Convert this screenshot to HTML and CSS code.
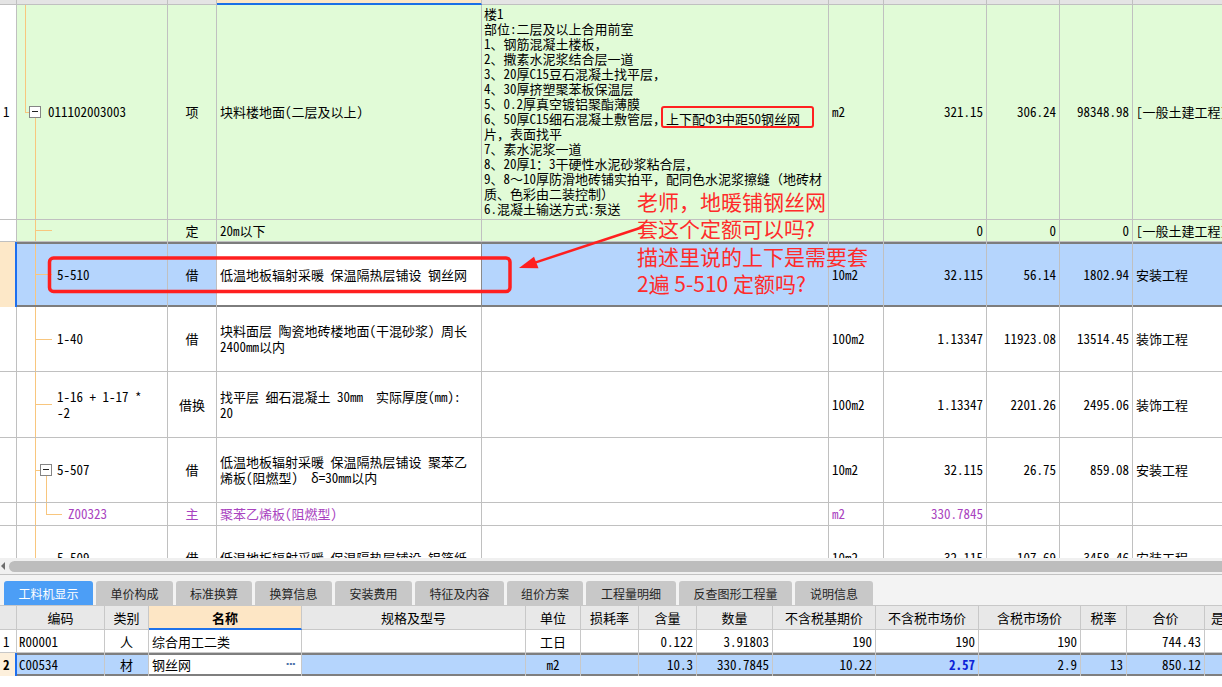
FILE: index.html
```html
<!DOCTYPE html>
<html lang="zh-CN">
<head>
<meta charset="utf-8">
<title>工料机</title>
<link rel="stylesheet" href="styles.css">
</head>
<body>
<div class="app">
  <div class="grid">
    <div class="row hdr">
      <div class="c num"></div><div class="c code"></div><div class="c type"></div><div class="c name hsel"></div><div class="c feat"></div><div class="c unit"></div><div class="c qty"></div><div class="c price"></div><div class="c total"></div><div class="c major"></div>
    </div>
    <div class="row h1 green">
      <div class="c num">1</div>
      <div class="c code t-root"><span class="box"></span>011102003003</div>
      <div class="c type">项</div>
      <div class="c name">块料楼地面(二层及以上)</div>
      <div class="c feat top"><div class="lines">楼1<br>部位:二层及以上合用前室<br>1、钢筋混凝土楼板，<br>2、撒素水泥浆结合层一道<br>3、20厚C15豆石混凝土找平层，<br>4、30厚挤塑聚苯板保温层<br>5、0.2厚真空镀铝聚酯薄膜<br>6、50厚C15细石混凝土敷管层，<span class="mark">上下配Φ3中距50钢丝网</span><br>片，表面找平<br>7、素水泥浆一道<br>8、20厚1：3干硬性水泥砂浆粘合层，<br>9、8～10厚防滑地砖铺实拍平，配同色水泥浆擦缝（地砖材<br>质、色彩由二装控制）<br>6.混凝土输送方式:泵送</div></div>
      <div class="c unit">m2</div>
      <div class="c qty">321.15</div>
      <div class="c price">306.24</div>
      <div class="c total">98348.98</div>
      <div class="c major">[一般土建工程]</div>
    </div>
    <div class="row h2 green">
      <div class="c num"></div>
      <div class="c code t-leaf"></div>
      <div class="c type">定</div>
      <div class="c name">20m以下</div>
      <div class="c feat"></div>
      <div class="c unit"></div>
      <div class="c qty">0</div>
      <div class="c price">0</div>
      <div class="c total">0</div>
      <div class="c major">[一般土建工程]</div>
    </div>
    <div class="row h3 sel">
      <div class="c num"></div>
      <div class="c code t-leaf">5-510</div>
      <div class="c type">借</div>
      <div class="c name">低温地板辐射采暖 保温隔热层铺设 钢丝网</div>
      <div class="c feat"></div>
      <div class="c unit">10m2</div>
      <div class="c qty">32.115</div>
      <div class="c price">56.14</div>
      <div class="c total">1802.94</div>
      <div class="c major">安装工程</div>
    </div>
    <div class="row h4">
      <div class="c num"></div>
      <div class="c code t-leaf">1-40</div>
      <div class="c type">借</div>
      <div class="c name"><div class="lines2">块料面层 陶瓷地砖楼地面(干混砂浆) 周长<br>2400mm以内</div></div>
      <div class="c feat"></div>
      <div class="c unit">100m2</div>
      <div class="c qty">1.13347</div>
      <div class="c price">11923.08</div>
      <div class="c total">13514.45</div>
      <div class="c major">装饰工程</div>
    </div>
    <div class="row h5">
      <div class="c num"></div>
      <div class="c code t-leaf"><div class="lines2">1-16 + 1-17 *<br>-2</div></div>
      <div class="c type">借换</div>
      <div class="c name"><div class="lines2">找平层 细石混凝土 30mm  实际厚度(mm):<br>20</div></div>
      <div class="c feat"></div>
      <div class="c unit">100m2</div>
      <div class="c qty">1.13347</div>
      <div class="c price">2201.26</div>
      <div class="c total">2495.06</div>
      <div class="c major">装饰工程</div>
    </div>
    <div class="row h6">
      <div class="c num"></div>
      <div class="c code t-node"><span class="box"></span>5-507</div>
      <div class="c type">借</div>
      <div class="c name"><div class="lines2">低温地板辐射采暖 保温隔热层铺设 聚苯乙<br>烯板(阻燃型)  δ=30mm以内</div></div>
      <div class="c feat"></div>
      <div class="c unit">10m2</div>
      <div class="c qty">32.115</div>
      <div class="c price">26.75</div>
      <div class="c total">859.08</div>
      <div class="c major">安装工程</div>
    </div>
    <div class="row h7 purple">
      <div class="c num"></div>
      <div class="c code t-sub">Z00323</div>
      <div class="c type">主</div>
      <div class="c name">聚苯乙烯板(阻燃型)</div>
      <div class="c feat"></div>
      <div class="c unit">m2</div>
      <div class="c qty">330.7845</div>
      <div class="c price"></div>
      <div class="c total"></div>
      <div class="c major"></div>
    </div>
    <div class="row h8">
      <div class="c num"></div>
      <div class="c code t-leaf">5-509</div>
      <div class="c type">借</div>
      <div class="c name">低温地板辐射采暖 保温隔热层铺设 铝箔纸</div>
      <div class="c feat"></div>
      <div class="c unit">10m2</div>
      <div class="c qty">32.115</div>
      <div class="c price">107.69</div>
      <div class="c total">3458.46</div>
      <div class="c major">安装工程</div>
    </div>

    <svg class="anno" width="1222" height="558" viewBox="0 0 1222 558" aria-hidden="true">
      <rect x="49.5" y="258" width="460.5" height="33.5" rx="4" fill="none" stroke="#ff1f1f" stroke-width="3.5"/>
      <line x1="643" y1="227" x2="535" y2="262.6" stroke="#ff1f1f" stroke-width="2.5"/>
      <polygon points="519,268 538.5,268.2 534,256.8" fill="#ff1f1f"/>
    </svg>
    <div class="note">老师，地暖铺钢丝网<br>套这个定额可以吗?<br>描述里说的上下是需要套<br>2遍 5-510 定额吗?</div>
  </div>

  <div class="hscroll"><span class="arrow"></span><span class="thumb"></span></div>

  <div class="tabs">
    <div class="tab on w89">工料机显示</div>
    <div class="tab w77">单价构成</div>
    <div class="tab w76">标准换算</div>
    <div class="tab w77">换算信息</div>
    <div class="tab w77">安装费用</div>
    <div class="tab w89">特征及内容</div>
    <div class="tab w76">组价方案</div>
    <div class="tab w90">工程量明细</div>
    <div class="tab w113">反查图形工程量</div>
    <div class="tab w78">说明信息</div>
  </div>

  <div class="bgrid">
    <div class="brow bhdr">
      <div class="bc bnum"></div>
      <div class="bc bcode">编码</div>
      <div class="bc btype">类别</div>
      <div class="bc bname">名称</div>
      <div class="bc bspec">规格及型号</div>
      <div class="bc bunit">单位</div>
      <div class="bc bloss">损耗率</div>
      <div class="bc bcont">含量</div>
      <div class="bc bqty">数量</div>
      <div class="bc bbase">不含税基期价</div>
      <div class="bc bmkt">不含税市场价</div>
      <div class="bc btmkt">含税市场价</div>
      <div class="bc btax">税率</div>
      <div class="bc btotal">合价</div>
      <div class="bc byes">是</div>
    </div>
    <div class="brow">
      <div class="bc bnum">1</div>
      <div class="bc bcode">R00001</div>
      <div class="bc btype">人</div>
      <div class="bc bname">综合用工二类</div>
      <div class="bc bspec"></div>
      <div class="bc bunit">工日</div>
      <div class="bc bloss"></div>
      <div class="bc bcont">0.122</div>
      <div class="bc bqty">3.91803</div>
      <div class="bc bbase">190</div>
      <div class="bc bmkt">190</div>
      <div class="bc btmkt">190</div>
      <div class="bc btax"></div>
      <div class="bc btotal">744.43</div>
      <div class="bc byes"></div>
    </div>
    <div class="brow bsel">
      <div class="bc bnum">2</div>
      <div class="bc bcode">C00534</div>
      <div class="bc btype">材</div>
      <div class="bc bname"><span>钢丝网</span><span class="dots">···</span></div>
      <div class="bc bspec"></div>
      <div class="bc bunit">m2</div>
      <div class="bc bloss"></div>
      <div class="bc bcont">10.3</div>
      <div class="bc bqty">330.7845</div>
      <div class="bc bbase">10.22</div>
      <div class="bc bmkt"><b class="hot">2.57</b></div>
      <div class="bc btmkt">2.9</div>
      <div class="bc btax">13</div>
      <div class="bc btotal">850.12</div>
      <div class="bc byes"></div>
    </div>
  </div>
</div>
</body>
</html>
```

FILE: styles.css
```css
* { box-sizing: border-box; }
html, body { margin: 0; padding: 0; }
body {
  width: 1222px;
  height: 687px;
  overflow: hidden;
  background: #fff;
  color: #000;
  font-family: "Noto Sans Mono CJK SC", "Noto Sans CJK SC", "DejaVu Sans", sans-serif;
  font-size: 13px;
}
.app { display: flex; flex-direction: column; height: 687px; }

/* ---------- top grid ---------- */
.grid { position: relative; height: 558px; overflow: hidden; flex: none; }
.row { display: flex; border-bottom: 1px solid #c0c0c0; }
.c {
  display: flex;
  align-items: center;
  flex: none;
  border-right: 1px solid #c0c0c0;
  white-space: pre;
  overflow: hidden;
  line-height: 16px;
}
.num { width: 17px; padding-left: 3px; }
.code { width: 151px; padding-left: 40px; }
.type { width: 49px; justify-content: center; }
.name { width: 265px; padding-left: 3px; }
.feat { width: 347px; padding-left: 2px; }
.unit { width: 55px; padding-left: 3px; }
.qty { width: 103px; }
.price, .total { width: 73px; }
.qty, .price, .total { justify-content: flex-end; padding-right: 3px; }
.major { flex: 1 1 auto; min-width: 0; padding-left: 3px; border-right: none; }

.hdr { height: 5px; border-bottom: none; }
.hdr .c { background: #e4e4e4; border-bottom: 1px solid #c0c0c0; }
.hdr .hsel { background: #fde6c6; border-bottom: 2px solid #1b6fe6; }

.h1 { height: 215px; }
.h2 { height: 22px; }
.h3 { height: 65px; }
.h4 { height: 65px; }
.h5 { height: 66px; }
.h6 { height: 65px; }
.h7 { height: 23px; }
.h8 { height: 65px; }

.green .c:not(.num) { background-color: #e1fbd7; }
.purple .c { color: #a943c0; }

.top { align-items: flex-start; padding-top: 1px; }
.lines { line-height: 15px; }
.lines2 { line-height: 16px; }

.mark { position: relative; display: inline-block; line-height: 15px; }
.mark::after {
  content: "";
  position: absolute;
  left: -5px; right: -14px; top: -5px; bottom: -2px;
  border: 2.5px solid #ff2020;
  border-radius: 3px;
}

/* selected row */
.sel { border-bottom: none; background: #b5d5fd; }
.sel .c:not(.num) { box-shadow: inset 0 2px #7d7d7d, inset 0 -2px #7d7d7d; }
.sel .num { background: #fde8c8; border-right: 2px solid #1d6ff0; }
.sel .name {
  background: #fff;
  border-right-color: #8a8a8a;
  box-shadow: inset 0 2px #7d7d7d, inset 0 -2px #7d7d7d, inset 2px 0 #7d7d7d;
}

/* tree lines */
.t-root, .t-leaf, .t-node, .t-sub { background-repeat: no-repeat; }
.t-root {
  padding-left: 12px;
  background-image: linear-gradient(#f8c67e, #f8c67e), linear-gradient(#f8c67e, #f8c67e), linear-gradient(#f8c67e, #f8c67e);
  background-position: 8px 0, 8px 50%, 18px 100%;
  background-size: 1px 50%, 4px 1px, 1px calc(50% - 6px);
}
.t-root .box { margin-right: 7px; }
.t-leaf {
  background-image: linear-gradient(#f8c67e, #f8c67e), linear-gradient(#f8c67e, #f8c67e);
  background-position: 18px 0, 18px 50%;
  background-size: 1px 100%, 17px 1px;
}
.t-node {
  padding-left: 23px;
  background-image: linear-gradient(#f8c67e, #f8c67e), linear-gradient(#f8c67e, #f8c67e), linear-gradient(#f8c67e, #f8c67e);
  background-position: 18px 0, 18px 50%, 29px 100%;
  background-size: 1px 100%, 5px 1px, 1px calc(50% - 6px);
}
.t-node .box { margin-right: 5px; }
.t-sub {
  padding-left: 51px;
  background-image: linear-gradient(#f8c67e, #f8c67e), linear-gradient(#f8c67e, #f8c67e), linear-gradient(#f8c67e, #f8c67e);
  background-position: 18px 0, 29px 0, 29px 50%;
  background-size: 1px 100%, 1px 50%, 16px 1px;
}
.box {
  position: relative;
  flex: none;
  width: 12px;
  height: 12px;
  border: 1px solid #858585;
  background: #fff;
}
.box::after {
  content: "";
  position: absolute;
  left: 2px; right: 2px; top: 4px;
  height: 1px;
  background: #222;
}

/* annotations */
.anno { position: absolute; left: 0; top: 0; pointer-events: none; }
.note {
  position: absolute;
  left: 637px;
  top: 188px;
  font-family: "Noto Sans CJK SC", sans-serif;
  font-size: 21px;
  line-height: 27.3px;
  color: #ff2b2b;
  white-space: nowrap;
  pointer-events: none;
}

/* ---------- scrollbar ---------- */
.hscroll {
  flex: none;
  height: 17px;
  background: #f0f0f0;
  border-bottom: 1px solid #c2c2c2;
  display: flex;
  align-items: center;
  padding-left: 1px;
}
.arrow {
  width: 0; height: 0;
  border-top: 4px solid transparent;
  border-bottom: 4px solid transparent;
  border-right: 4px solid #6e6e6e;
  margin-right: 4px;
}
.thumb { flex: 1; height: 11px; background: #bdbdbd; border-radius: 6px 0 0 6px; }

/* ---------- tabs ---------- */
.tabs {
  flex: none;
  height: 30px;
  background: #f3f3f3;
  display: flex;
  align-items: flex-end;
  gap: 3px;
  padding-left: 4px;
}
.tab {
  height: 24px;
  border-radius: 3px 3px 0 0;
  background: #c8c8c8;
  color: #262626;
  font-family: "Noto Sans CJK SC", sans-serif;
  font-size: 12px;
  display: flex;
  align-items: center;
  justify-content: center;
}
.tab.on { background: #4c9ef6; color: #fff; }
.w76 { width: 76px; } .w77 { width: 77px; } .w78 { width: 78px; }
.w89 { width: 89px; } .w90 { width: 90px; } .w113 { width: 113px; }

/* ---------- bottom grid ---------- */
.bgrid { flex: 1; border-top: 1px solid #c8c8c8; background: #fff; }
.brow { display: flex; height: 23px; border-bottom: 1px solid #c8c8c8; }
.bc {
  display: flex;
  align-items: center;
  flex: none;
  border-right: 1px solid #c8c8c8;
  white-space: nowrap;
  overflow: hidden;
  justify-content: flex-end;
  padding-right: 3px;
}
.bnum { width: 17px; justify-content: flex-start; padding-left: 3px; padding-right: 0; }
.bcode { width: 88px; justify-content: flex-start; padding-left: 2px; }
.btype { width: 44px; justify-content: center; padding-right: 0; }
.bname { width: 153px; justify-content: flex-start; padding-left: 3px; }
.bspec { width: 224px; }
.bunit { width: 55px; justify-content: center; padding-right: 0; }
.bloss { width: 58px; }
.bcont { width: 58px; }
.bqty { width: 76px; }
.bbase { width: 103px; }
.bmkt { width: 103px; }
.btmkt { width: 102px; }
.btax { width: 46px; }
.btotal { width: 78px; }
.byes { flex: 1 1 auto; min-width: 0; justify-content: flex-start; padding-left: 6px; border-right: none; }

.bhdr { height: 24px; border-bottom: none; background: #e8e8e8; }
.bhdr .bc { justify-content: center; padding: 0; border-bottom: 1px solid #c8c8c8; }
.bhdr .byes { justify-content: flex-start; padding-left: 6px; }
.bhdr .bname { background: #fde6c5; font-weight: bold; border-bottom: 2px solid #1f72ea; }

.bsel { border-bottom: none; background: #b5d5fd; }
.bsel .bc:not(.bnum) { box-shadow: inset 0 2px #7f7f7f, inset 0 -2px #7f7f7f; }
.bsel .bnum { background: #fdf0dc; font-weight: bold; border-right: 2px solid #1d6ff0; }
.bsel .bname {
  background: #fff;
  justify-content: space-between;
  padding-right: 6px;
  box-shadow: inset 0 2px #7f7f7f, inset 0 -2px #7f7f7f, inset 2px 0 #7f7f7f, inset -2px 0 #7f7f7f;
}
.dots {
  font-family: "DejaVu Sans", sans-serif;
  font-size: 11px;
  color: #4d72a8;
  font-weight: bold;
  letter-spacing: -1px;
}
.hot { color: #0b22d8; }
```
